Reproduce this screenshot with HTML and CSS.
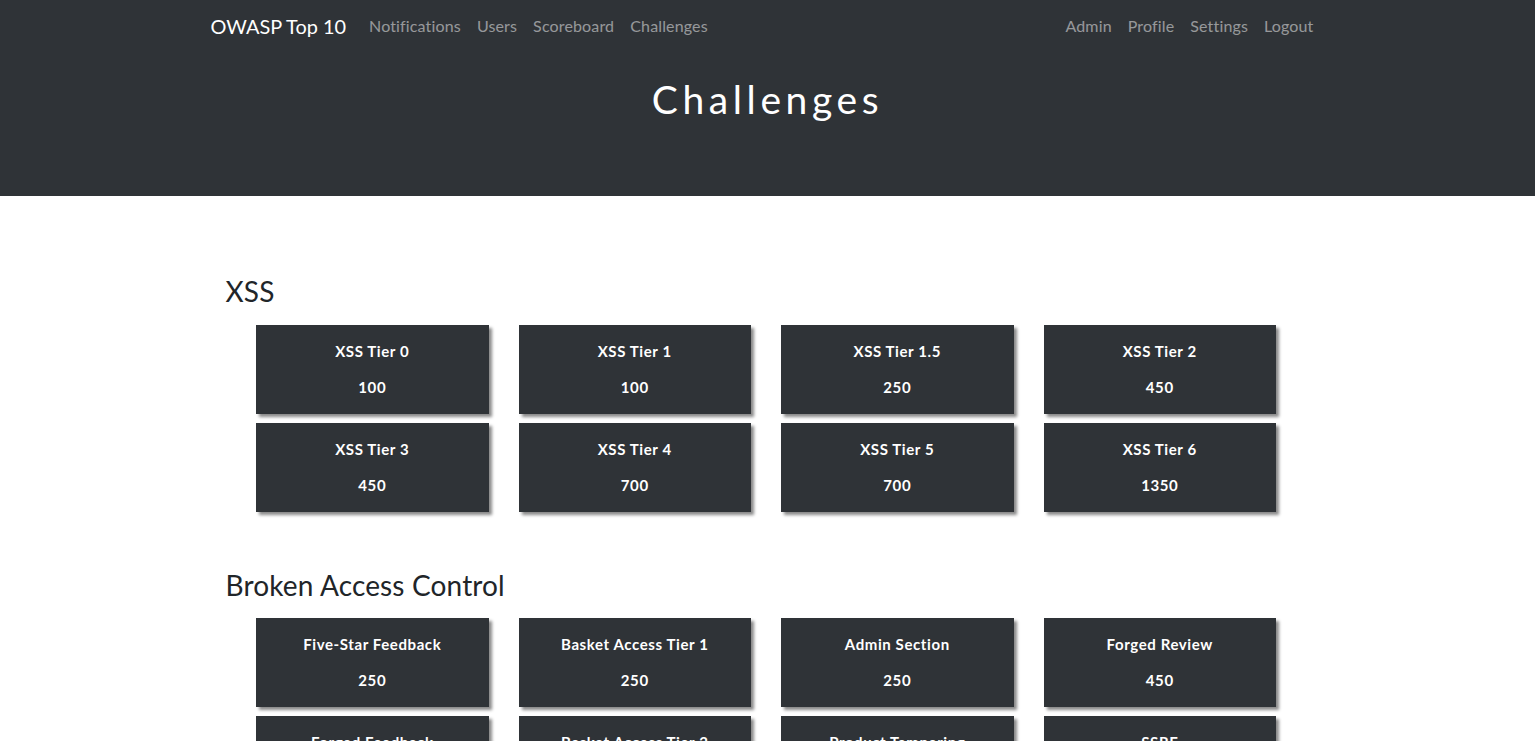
FILE: index.html
```html
<!DOCTYPE html>
<html lang="en">
<head>
<meta charset="utf-8">
<title>Challenges</title>
<link rel="stylesheet" href="styles.css">
</head>
<body>
<header class="top">
  <nav class="navbar">
    <div class="nav-inner">
      <a class="brand" href="#">OWASP Top 10</a>
      <ul class="nav-links">
        <li><a href="#">Notifications</a></li>
        <li><a href="#">Users</a></li>
        <li><a href="#">Scoreboard</a></li>
        <li><a href="#">Challenges</a></li>
      </ul>
      <ul class="nav-links nav-right">
        <li><a href="#">Admin</a></li>
        <li><a href="#">Profile</a></li>
        <li><a href="#">Settings</a></li>
        <li><a href="#">Logout</a></li>
      </ul>
    </div>
  </nav>
  <div class="jumbo">
    <h1 class="jumbo-title">Challenges</h1>
  </div>
</header>

<main class="container">
  <section class="category">
    <h3 class="cat-title">XSS</h3>
    <div class="board">
      <button class="chal"><p class="chal-name">XSS Tier 0</p><span class="chal-val">100</span></button>
      <button class="chal"><p class="chal-name">XSS Tier 1</p><span class="chal-val">100</span></button>
      <button class="chal"><p class="chal-name">XSS Tier 1.5</p><span class="chal-val">250</span></button>
      <button class="chal"><p class="chal-name">XSS Tier 2</p><span class="chal-val">450</span></button>
      <button class="chal"><p class="chal-name">XSS Tier 3</p><span class="chal-val">450</span></button>
      <button class="chal"><p class="chal-name">XSS Tier 4</p><span class="chal-val">700</span></button>
      <button class="chal"><p class="chal-name">XSS Tier 5</p><span class="chal-val">700</span></button>
      <button class="chal"><p class="chal-name">XSS Tier 6</p><span class="chal-val">1350</span></button>
    </div>
  </section>

  <section class="category">
    <h3 class="cat-title">Broken Access Control</h3>
    <div class="board">
      <button class="chal"><p class="chal-name">Five-Star Feedback</p><span class="chal-val">250</span></button>
      <button class="chal"><p class="chal-name">Basket Access Tier 1</p><span class="chal-val">250</span></button>
      <button class="chal"><p class="chal-name">Admin Section</p><span class="chal-val">250</span></button>
      <button class="chal"><p class="chal-name">Forged Review</p><span class="chal-val">450</span></button>
      <button class="chal"><p class="chal-name">Forged Feedback</p><span class="chal-val">450</span></button>
      <button class="chal"><p class="chal-name">Basket Access Tier 2</p><span class="chal-val">450</span></button>
      <button class="chal"><p class="chal-name">Product Tampering</p><span class="chal-val">450</span></button>
      <button class="chal"><p class="chal-name">SSRF</p><span class="chal-val">700</span></button>
    </div>
  </section>
</main>
</body>
</html>
```

FILE: styles.css
```css
* { box-sizing: border-box; }

html, body {
  margin: 0;
  padding: 0;
}

body {
  font-family: Lato, "Open Sans", "Liberation Sans", sans-serif;
  color: #212529;
  background: #fff;
}

.top {
  background: #2f3337;
  height: 196px;
}

.navbar {
  height: 52px;
  display: flex;
  align-items: center;
}

.nav-inner {
  width: 1140px;
  margin: 0 auto;
  padding: 0 16px 0 13px;
  display: flex;
  align-items: center;
}

.brand {
  color: #fff;
  text-decoration: none;
  font-size: 19.9px;
  line-height: 30px;
  margin-right: 15px;
  white-space: nowrap;
}

.nav-links {
  list-style: none;
  margin: 0;
  padding: 0;
  display: flex;
}

.nav-right {
  margin-left: auto;
}

.nav-links a {
  display: block;
  padding: 0 8px;
  font-size: 16px;
  line-height: 24px;
  letter-spacing: 0.15px;
  color: rgba(255, 255, 255, 0.5);
  text-decoration: none;
}

.jumbo {
  padding-top: 24px;
  text-align: center;
}

.jumbo-title {
  margin: 0;
  color: #fff;
  font-family: Lato, "Open Sans", sans-serif;
  font-weight: 400;
  font-size: 39px;
  line-height: 1.2;
  letter-spacing: 4.6px;
}

.container {
  width: 1140px;
  margin: 0 auto;
  padding: 79px 15px 0;
}

.category {
  margin-bottom: 57px;
}

.cat-title {
  margin: 0 0 16px 13px;
  font-size: 28px;
  font-weight: 400;
  line-height: 1.2;
  letter-spacing: 0.15px;
  color: #212529;
}

.board {
  margin-left: 43.5px;
  width: 1020px;
  display: grid;
  grid-template-columns: repeat(4, 1fr);
  column-gap: 30px;
  row-gap: 9px;
}

.chal {
  display: block;
  width: 100%;
  border: 0;
  border-radius: 0;
  background: #2f3337;
  color: #fff;
  font-family: Lato, "Open Sans", sans-serif;
  font-weight: 700;
  font-size: 15px;
  line-height: 21px;
  letter-spacing: 0.6px;
  padding: 16px 8px;
  text-align: center;
  box-shadow: 3px 3px 3px #8a8a8a;
  white-space: nowrap;
  overflow: hidden;
}

.chal-name {
  margin: 0 0 15px;
}

.chal-val {
  display: block;
}
```
